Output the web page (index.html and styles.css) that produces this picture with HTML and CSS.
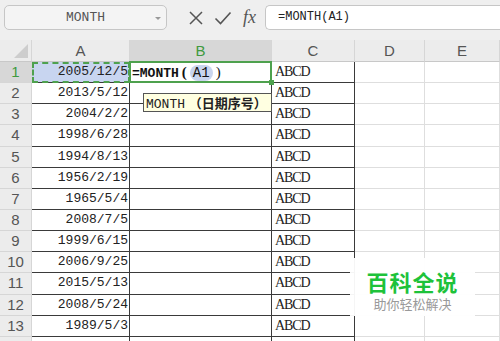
FILE: index.html
```html
<!DOCTYPE html>
<html lang="zh-CN">
<head>
    <meta charset="UTF-8">
    <title>MONTH</title>
    <link rel="stylesheet" href="styles.css">
</head>
<body>
    <div class="toolbar">
        <div class="name-box">
            <span>MONTH</span>
            <span class="arrow"></span>
        </div>
        <div class="tools">
            <svg width="16" height="16" viewBox="0 0 16 16"><path d="M2 2 L14 14 M14 2 L2 14" stroke="#555" stroke-width="1.5" fill="none"/></svg>
            <svg width="18" height="16" viewBox="0 0 18 16"><path d="M1.5 8.5 L6.5 13.5 L16.5 2.5" stroke="#555" stroke-width="1.6" fill="none"/></svg>
            <span class="fx">fx</span>
        </div>
        <div class="formula-box">=MONTH(A1)</div>
    </div>

    <div class="sheet">
        <!-- 列标题 -->
        <div class="hd corner"><span class="tri"></span></div>
        <div class="hd">A</div>
        <div class="hd on">B</div>
        <div class="hd">C</div>
        <div class="hd">D</div>
        <div class="hd">E</div>

        <div class="rh on">1</div><div class="cell a sel-a">2005/12/5</div><div class="cell b sel-b"><b>=MONTH</b><b class="fw">(</b><span class="ref">A1</span><span class="fw">)</span><i class="handle"></i></div><div class="cell c">ABCD</div><div class="cell d"></div><div class="cell e"></div>
        <div class="rh">2</div><div class="cell a">2013/5/12</div><div class="cell b"></div><div class="cell c">ABCD</div><div class="cell d"></div><div class="cell e"></div>
        <div class="rh">3</div><div class="cell a">2004/2/2</div><div class="cell b"></div><div class="cell c">ABCD</div><div class="cell d"></div><div class="cell e"></div>
        <div class="rh">4</div><div class="cell a">1998/6/28</div><div class="cell b"></div><div class="cell c">ABCD</div><div class="cell d"></div><div class="cell e"></div>
        <div class="rh">5</div><div class="cell a">1994/8/13</div><div class="cell b"></div><div class="cell c">ABCD</div><div class="cell d"></div><div class="cell e"></div>
        <div class="rh">6</div><div class="cell a">1956/2/19</div><div class="cell b"></div><div class="cell c">ABCD</div><div class="cell d"></div><div class="cell e"></div>
        <div class="rh">7</div><div class="cell a">1965/5/4</div><div class="cell b"></div><div class="cell c">ABCD</div><div class="cell d"></div><div class="cell e"></div>
        <div class="rh">8</div><div class="cell a">2008/7/5</div><div class="cell b"></div><div class="cell c">ABCD</div><div class="cell d"></div><div class="cell e"></div>
        <div class="rh">9</div><div class="cell a">1999/6/15</div><div class="cell b"></div><div class="cell c">ABCD</div><div class="cell d"></div><div class="cell e"></div>
        <div class="rh">10</div><div class="cell a">2006/9/25</div><div class="cell b"></div><div class="cell c">ABCD</div><div class="cell d"></div><div class="cell e"></div>
        <div class="rh">11</div><div class="cell a">2015/5/13</div><div class="cell b"></div><div class="cell c">ABCD</div><div class="cell d"></div><div class="cell e"></div>
        <div class="rh">12</div><div class="cell a">2008/5/24</div><div class="cell b"></div><div class="cell c">ABCD</div><div class="cell d"></div><div class="cell e"></div>
        <div class="rh">13</div><div class="cell a">1989/5/3</div><div class="cell b"></div><div class="cell c">ABCD</div><div class="cell d"></div><div class="cell e"></div>
        <div class="rh"></div><div class="cell a"></div><div class="cell b"></div><div class="cell c"></div><div class="cell d"></div><div class="cell e"></div>

        <!-- 函数提示 -->
        <div class="tip">MONTH <b>（日期序号）</b></div>
    </div>

    <div class="watermark">
        <div class="wm-title">百科全说</div>
        <div class="wm-sub">助你轻松解决</div>
    </div>
</body>
</html>
```

FILE: styles.css
```css
body {
    margin: 0;
    width: 500px;
    height: 341px;
    overflow: hidden;
    background-color: #fff;
    font-family: 'Liberation Sans', 'Noto Sans CJK SC', sans-serif;
    position: relative;
}
.toolbar {
    height: 40px;
    background-color: #efefef;
    display: flex;
    align-items: flex-start;
    padding: 5px 0 0 4px;
    box-sizing: border-box;
}
.name-box {
    width: 163px;
    height: 25px;
    box-sizing: border-box;
    border: 1px solid #c6c6c6;
    border-radius: 5px;
    background-color: #f4f4f4;
    display: flex;
    align-items: center;
    justify-content: center;
    position: relative;
    font-family: 'Liberation Mono', monospace;
    font-size: 13px;
    color: #555;
}
.arrow {
    position: absolute;
    right: 5px;
    top: 11px;
    border-left: 3px solid transparent;
    border-right: 3px solid transparent;
    border-top: 3px solid #999;
}
.tools {
    display: flex;
    align-items: center;
    gap: 10px;
    height: 25px;
    margin-left: 21px;
    width: 76px;
}
.fx {
    font-family: 'Liberation Serif', serif;
    font-style: italic;
    font-size: 18px;
    color: #555;
    margin-left: 1px;
}
.formula-box {
    flex: 1;
    height: 25px;
    box-sizing: border-box;
    margin-left: 1px;
    border: 1px solid #c6c6c6;
    border-right: none;
    border-radius: 5px 0 0 5px;
    background-color: #fff;
    padding-left: 12px;
    font-family: 'Liberation Mono', monospace;
    font-size: 12px;
    line-height: 23px;
    color: #222;
}
.sheet {
    display: grid;
    grid-template-columns: 32px 98px 142px 83px 70px 1fr;
    grid-template-rows: 22px;
    grid-auto-rows: 21.15px;
    position: relative;
}
.hd {
    background-color: #ececec;
    border-right: 1px solid #d6d6d6;
    border-bottom: 1px solid #c8c8c8;
    text-align: center;
    font-size: 15px;
    line-height: 22px;
    color: #555;
}
.hd.on {
    background-color: #d7d7d7;
    color: #3f9a3f;
}
.corner {
    position: relative;
}
.tri {
    position: absolute;
    right: 3px;
    bottom: 3px;
    border-left: 14px solid transparent;
    border-bottom: 14px solid #cdcdcd;
}
.rh {
    background-color: #ececec;
    border-right: 1px solid #d6d6d6;
    border-bottom: 1px solid #d6d6d6;
    text-align: center;
    font-size: 15px;
    line-height: 20px;
    color: #555;
}
.rh.on {
    background-color: #d7d7d7;
    color: #3f9a3f;
}
.cell {
    border-right: 1px solid #dedede;
    border-bottom: 1px solid #dedede;
    line-height: 20px;
    overflow: hidden;
    white-space: nowrap;
    position: relative;
}
.a, .b, .c {
    border-color: #3a3a3a;
}
.a {
    text-align: right;
    padding-right: 1px;
    font-family: 'Liberation Mono', monospace;
    font-size: 13px;
    color: #222;
}
.c {
    padding-left: 3px;
    font-family: 'Liberation Serif', serif;
    font-size: 14px;
    letter-spacing: -1.1px;
    color: #222;
}
.sel-a {
    background-color: #c8d5f0;
    overflow: visible;
}
.sel-a::after {
    content: "";
    position: absolute;
    left: 0;
    top: 0;
    right: -1px;
    bottom: -1px;
    border: 2px dashed #4ea14e;
}
.sel-b {
    overflow: visible;
    padding-left: 2px;
    font-family: 'Liberation Mono', 'Noto Sans CJK SC', monospace;
    font-size: 13px;
    color: #111;
}
.sel-b::after {
    content: "";
    position: absolute;
    left: -1px;
    top: -1px;
    right: -1px;
    bottom: -1px;
    border: 2px solid #4ea14e;
}
.fw {
    font-family: 'Liberation Serif', serif;
    font-size: 15px;
    margin: 0 3px;
}
.ref {
    background-color: #c9d5ee;
    border-radius: 9px;
    padding: 0 3px;
    font-size: 14px;
}
.handle {
    position: absolute;
    right: -3px;
    bottom: -3px;
    width: 5px;
    height: 5px;
    background-color: #4ea14e;
    z-index: 2;
}
.tip {
    position: absolute;
    left: 143px;
    top: 53px;
    width: 129px;
    height: 19px;
    box-sizing: border-box;
    background-color: #ffffe1;
    border: 1px solid #555;
    font-family: 'Liberation Mono', monospace;
    font-size: 13px;
    line-height: 17px;
    padding-left: 2px;
    white-space: nowrap;
    overflow: hidden;
    color: #222;
}
.tip b {
    font-family: 'Noto Sans CJK SC', sans-serif;
    margin-left: -4px;
}
.watermark {
    position: absolute;
    left: 350px;
    top: 258px;
    width: 125px;
    height: 58px;
    background-color: rgba(255, 255, 255, 0.95);
    text-align: center;
    font-family: 'Noto Sans CJK SC', sans-serif;
}
.wm-title {
    margin-top: 11px;
    font-size: 22px;
    line-height: 24px;
    font-weight: bold;
    color: #1dc23a;
    letter-spacing: 1px;
}
.wm-sub {
    margin-top: 3px;
    font-size: 13px;
    line-height: 16px;
    color: #999;
}
```
